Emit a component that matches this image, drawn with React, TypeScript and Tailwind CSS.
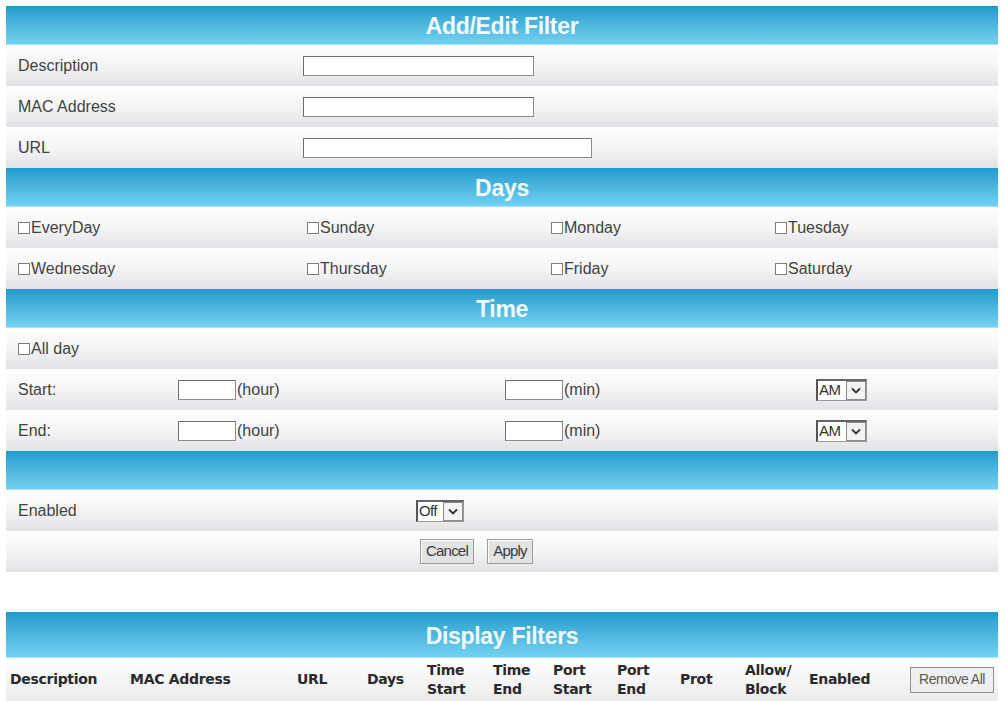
import React from 'react'

const sans = "font-['Liberation_Sans',Arial,sans-serif]"

const Header = ({ title, tall }: { title?: string; tall?: boolean }) => (
  <div
    className={`flex items-center justify-center border-b border-[#a7e3f4] bg-linear-to-b from-[#1c9ccd] to-[#72d1f1] ${tall ? 'h-[46px] pt-1' : 'h-[39px] pt-0.5'}`}
  >
    {title && <span className="text-[23px] font-bold tracking-[-0.3px] text-[#f1fafd]">{title}</span>}
  </div>
)

const Row = ({ children, className = '' }: { children: React.ReactNode; className?: string }) => (
  <div className={`h-[41px] bg-linear-to-b from-[#fefefe] via-[#f5f5f6] to-[#e2e1e5] ${className}`}>
    {children}
  </div>
)

const TextBox = ({ w }: { w: string }) => (
  <div className={`h-[20px] ${w} border border-[#8c8c8c] border-t-[#6f6f6f] border-l-[#6f6f6f] bg-white`} />
)

const Check = ({ label }: { label: string }) => (
  <span className="flex items-center text-[16px] text-[#424242]">
    <span className="mr-px h-[12px] w-[12px] border border-[#7d7d7d] bg-white" />
    {label}
  </span>
)

const FakeSelect = ({ value, w }: { value: string; w: string }) => (
  <div className={`flex h-[22px] ${w} items-stretch border border-[#9a9a9a] border-l-2 border-t-2 border-l-[#555] border-t-[#666] bg-white`}>
    <span className="flex flex-1 items-center pl-px text-[15px] tracking-[-0.6px] text-[#333]">{value}</span>
    <span className="flex w-[20px] items-center justify-center border border-[#8a8a8a] bg-[#f3f3f3]">
      <svg width="10" height="7" viewBox="0 0 10 7">
        <path d="M1 1.5 L5 5.5 L9 1.5" fill="none" stroke="#333" strokeWidth="1.8" />
      </svg>
    </span>
  </div>
)

const Btn = ({ label, w }: { label: string; w: string }) => (
  <div className={`flex h-[25px] ${w} items-center justify-center border border-[#9c9c9c] bg-[#e3e3e3] text-[15px] tracking-[-0.8px] text-[#3a3a3a] shadow-[inset_1px_1px_0_#fff]`}>
    {label}
  </div>
)

const days = [
  ['EveryDay', 'Sunday', 'Monday', 'Tuesday'],
  ['Wednesday', 'Thursday', 'Friday', 'Saturday'],
]

const cols: [string[], string][] = [
  [['Description'], 'w-[120px]'],
  [['MAC Address'], 'w-[167px]'],
  [['URL'], 'w-[70px]'],
  [['Days'], 'w-[60px]'],
  [['Time', 'Start'], 'w-[66px]'],
  [['Time', 'End'], 'w-[60px]'],
  [['Port', 'Start'], 'w-[64px]'],
  [['Port', 'End'], 'w-[63px]'],
  [['Prot'], 'w-[65px]'],
  [['Allow/', 'Block'], 'w-[64px]'],
  [['Enabled'], 'w-[101px]'],
]

export default function App() {
  return (
    <div className={`h-[701px] w-full overflow-hidden bg-white px-[6px] pt-[6px] ${sans}`}>
      <Header title="Add/Edit Filter" />
      {[
        ['Description', 'w-[231px]'],
        ['MAC Address', 'w-[231px]'],
        ['URL', 'w-[289px]'],
      ].map(([label, w]) => (
        <Row key={label} className="flex items-center">
          <span className="w-[297px] pl-3 text-[16px] text-[#424242]">{label}</span>
          <TextBox w={w} />
        </Row>
      ))}

      <Header title="Days" />
      {days.map((row) => (
        <Row key={row[0]} className="grid grid-cols-[301px_244px_224px_1fr] items-center">
          {row.map((d, i) => (
            <div key={d} className={i === 0 ? 'pl-3' : ''}>
              <Check label={d} />
            </div>
          ))}
        </Row>
      ))}

      <Header title="Time" />
      <Row className="flex items-center pl-3">
        <Check label="All day" />
      </Row>
      {['Start:', 'End:'].map((label) => (
        <Row key={label} className="grid grid-cols-[172px_327px_311px_1fr] items-center text-[16px] text-[#424242]">
          <span className="pl-3">{label}</span>
          <span className="flex items-center gap-[1px]">
            <TextBox w="w-[58px]" />
            (hour)
          </span>
          <span className="flex items-center gap-[1px]">
            <TextBox w="w-[58px]" />
            (min)
          </span>
          <FakeSelect value="AM" w="w-[51px]" />
        </Row>
      ))}

      <Header />
      <Row className="flex items-center">
        <span className="w-[410px] pl-3 text-[16px] text-[#424242]">Enabled</span>
        <FakeSelect value="Off" w="w-[48px]" />
      </Row>
      <Row className="flex items-center gap-[13px] pl-[414px]">
        <Btn label="Cancel" w="w-[54px]" />
        <Btn label="Apply" w="w-[46px]" />
      </Row>

      <div className="h-[40px]" />

      <Header title="Display Filters" tall />
      <div className="flex h-[43px] items-center bg-linear-to-b from-white to-[#ecebee] pl-1 font-['DejaVu_Sans',Verdana,sans-serif] text-[14px] font-bold leading-[19px] tracking-[-0.3px] text-[#2a2a2a]">
        {cols.map(([lines, w]) => (
          <div key={lines.join('')} className={`${w} shrink-0`}>
            {lines.map((l) => (
              <div key={l}>{l}</div>
            ))}
          </div>
        ))}
        <div className={`flex h-[26px] w-[84px] items-center justify-center border border-[#8f8f8f] bg-[#efefef] text-[14px] font-normal tracking-[-0.5px] text-[#5a5a5a] ${sans}`}>
          Remove All
        </div>
      </div>
    </div>
  )
}
